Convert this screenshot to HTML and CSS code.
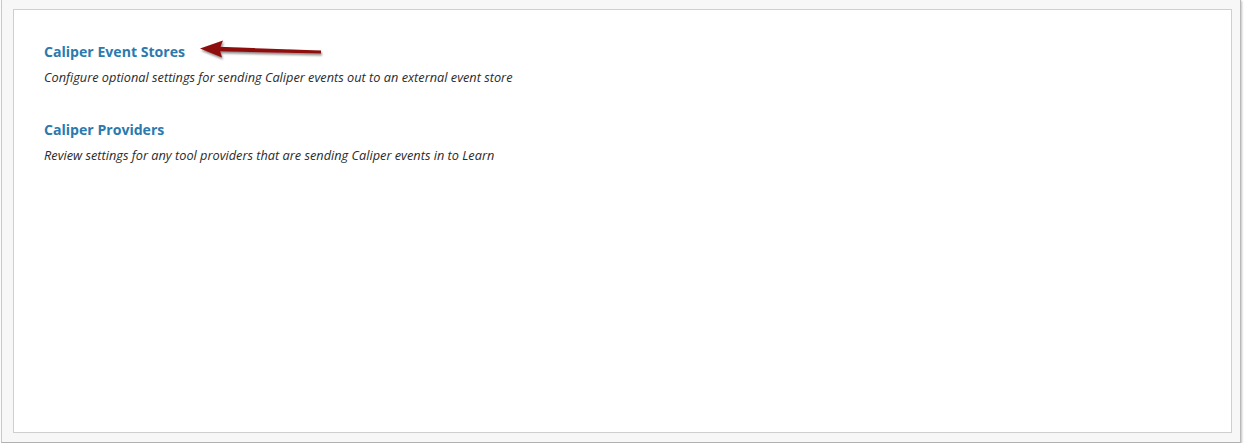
FILE: index.html
```html
<!DOCTYPE html>
<html>
<head>
<meta charset="utf-8">
<link rel="stylesheet" href="styles.css">
</head>
<body>
<div class="frame">
  <div class="panel">
    <div class="item">
      <a class="title" href="#">Caliper Event Stores</a>
      <p class="desc">Configure optional settings for sending Caliper events out to an external event store</p>
    </div>
    <div class="item">
      <a class="title" href="#">Caliper Providers</a>
      <p class="desc">Review settings for any tool providers that are sending Caliper events in to Learn</p>
    </div>
  </div>
  <svg class="arrow" width="140" height="30" viewBox="0 0 140 30">
    <defs>
      <filter id="sh" x="-20%" y="-50%" width="140%" height="200%">
        <feDropShadow dx="1" dy="2" stdDeviation="1.2" flood-color="#000" flood-opacity="0.45"/>
      </filter>
    </defs>
    <g filter="url(#sh)">
      <path d="M20 8.8 L122 12.6 L122 15.6 L20 13.2 Z" fill="#8e0b0d"/>
      <path d="M1 10.5 L24 2.5 L20.5 11 L23 19.5 Z" fill="#8e0b0d"/>
    </g>
  </svg>
</div>
</body>
</html>
```
FILE: styles.css
```css
html, body {
  margin: 0;
  padding: 0;
  background: #ffffff;
}
.frame {
  position: relative;
  width: 1240px;
  height: 443px;
  box-sizing: border-box;
  margin-left: 1px;
  background: #f7f7f7;
  border-left: 1px solid #c8c8c8;
  border-right: 1px solid #b8b8b8;
  border-bottom: 1px solid #b0b0b0;
  box-shadow: 1px 1px 2px rgba(0,0,0,0.25);
  padding: 9px 8px 0 11px;
}
.panel {
  box-sizing: border-box;
  height: 424px;
  background: #ffffff;
  border: 1px solid #cfcfcf;
  padding: 32px 30px 0 30px;
  display: flex;
  flex-direction: column;
  gap: 33px;
}
.item {
  display: flex;
  flex-direction: column;
}
.title {
  font-family: "Open Sans", sans-serif;
  font-weight: 700;
  font-size: 14.1px;
  line-height: 20px;
  color: #2a7aaf;
  text-decoration: none;
}
.desc {
  margin: 5px 0 0 0;
  font-family: "Open Sans", sans-serif;
  font-style: italic;
  font-size: 12.75px;
  line-height: 20px;
  color: #2b2b2b;
}
.arrow {
  position: absolute;
  left: 197px;
  top: 38px;
}
```
